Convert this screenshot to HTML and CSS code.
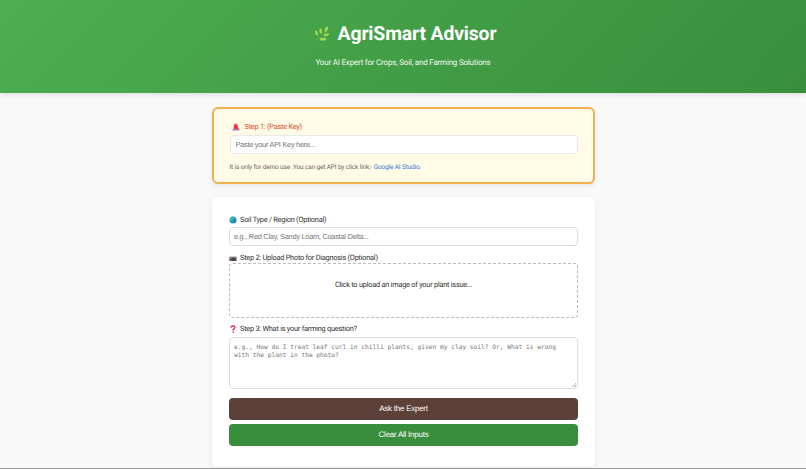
FILE: index.html
```html
<!DOCTYPE html>
<html lang="en">
<head>
    <meta charset="UTF-8">
    <meta name="viewport" content="width=device-width, initial-scale=1.0">
    <title>AgriSmart Advisor</title>
    <link rel="stylesheet" href="styles.css">
</head>
<body>

    <header class="header">
        <h1>
            <svg class="icon-leaf" viewBox="0 0 16 16">
                <path d="M2 14Q8 12 12 5" stroke="#7cb342" stroke-width=".7" fill="none"/>
                <g fill="#a5d84a">
                    <ellipse cx="2.5" cy="7" rx="1.3" ry="2.6" transform="rotate(-20 2.5 7)"/>
                    <ellipse cx="6.7" cy="5" rx="1.3" ry="2.8" transform="rotate(-5 6.7 5)"/>
                    <ellipse cx="12.3" cy="3.3" rx="1.5" ry="2.8" transform="rotate(22 12.3 3.3)"/>
                    <ellipse cx="12.5" cy="8.8" rx="2.8" ry="1.3" transform="rotate(-15 12.5 8.8)"/>
                    <ellipse cx="9" cy="13.2" rx="3.3" ry="1.4" transform="rotate(-5 9 13.2)"/>
                </g>
            </svg>
            <span>AgriSmart Advisor</span>
        </h1>
        <p>Your AI Expert for Crops, Soil, and Farming Solutions</p>
    </header>

    <main class="container">
        <!-- API key -->
        <section class="api-card">
            <label class="api-label" for="apiKey">
                <svg class="icon-siren" viewBox="0 0 8 8">
                    <path d="M1.6 6.2L2.2 1.4Q3.5-.2 5 .9L6.9 6.2Z" fill="#f02f49"/>
                    <path d="M3 2L4 .8L5 2Z" fill="#ff8a80"/>
                    <path d="M.8 6.2H7.4V7.6H.3Z" fill="#a06fb5"/>
                    <path d="M.7 2.5L1.6 3.4M6.4 1.2L7.2.4" stroke="#f2a0a0" stroke-width=".6"/>
                </svg>
                Step 1: (Paste Key)
            </label>
            <input class="field" type="text" id="apiKey" placeholder="Paste your API Key here...">
            <p class="note">It is only for demo use .You can get API by click link:- <a href="#">Google AI Studio.</a></p>
        </section>

        <!-- Question form -->
        <section class="form-card">
            <label for="soil">
                <svg viewBox="0 0 8 8">
                    <circle cx="4" cy="4" r="3.5" fill="#2196d3"/>
                    <path d="M1 2Q2.5.2 4.6.6L4.8 2.2L3.4 3L3.6 4.6L2 5.2L.7 3.8Z" fill="#45bd91"/>
                    <path d="M5 4L7.3 3.5Q7.4 5.8 5.6 7L4.6 5.4Z" fill="#2878b5"/>
                </svg>
                Soil Type / Region (Optional)
            </label>
            <input class="field" type="text" id="soil" placeholder="e.g., Red Clay, Sandy Loam, Coastal Delta...">

            <label for="photo">
                <svg viewBox="0 0 8 8">
                    <path d="M.4 2.8H7.6V7H.4Z" fill="#655c67"/>
                    <path d="M.4 2.8H7.6V4H.4Z" fill="#93878f"/>
                    <circle cx="4.5" cy="5.1" r="1.5" fill="#343039"/>
                    <circle cx="4.5" cy="5.1" r=".6" fill="#766b8b"/>
                </svg>
                Step 2: Upload Photo for Diagnosis (Optional)
            </label>
            <div class="upload-box" id="photo">Click to upload an image of your plant issue...</div>

            <label for="question">
                <svg viewBox="0 0 8 8">
                    <path d="M2 2.6Q2.1 1 4 1Q5.9 1 5.9 2.6Q5.9 3.5 4.2 4.4V5.4" fill="none" stroke="#e62d55" stroke-width="1.4"/>
                    <circle cx="4.2" cy="7" r=".8" fill="#e62d55"/>
                </svg>
                Step 3: What is your farming question?
            </label>
            <textarea id="question" placeholder="e.g., How do I treat leaf curl in chilli plants, given my clay soil? Or, What is wrong with the plant in the photo?"></textarea>

            <button class="btn btn-ask">Ask the Expert</button>
            <button class="btn btn-clear">Clear All Inputs</button>
        </section>
    </main>

</body>
</html>
```
FILE: styles.css
```css
* {
    box-sizing: border-box;
}

body {
    margin: 0;
    height: 469px;
    overflow: hidden;
    font-family: Roboto, "Liberation Sans", sans-serif;
    font-size: 7.4px;
    letter-spacing: -0.25px;
    color: #333;
    background-color: #f9f9f9;
    border-bottom: 1px solid #999;
    text-rendering: geometricPrecision;
}

/* Header */
.header {
    height: 93px;
    padding-top: 22px;
    text-align: center;
    color: white;
    background: linear-gradient(135deg, #4caf50, #388e3c);
    box-shadow: 0 2px 5px rgba(0, 0, 0, 0.1);
}

.header h1 {
    display: flex;
    justify-content: center;
    align-items: center;
    gap: 8px;
    margin: 0;
    padding-left: 4px;
    font-size: 19.4px;
    letter-spacing: -0.15px;
    line-height: 24px;
    font-weight: 700;
}

.icon-leaf {
    width: 16px;
    height: 16px;
}

.header p {
    margin: 12px 0 0;
    font-size: 8px;
    letter-spacing: -0.2px;
    line-height: 10px;
    color: #eef7ee;
}

.container {
    width: 383px;
    margin: 14px auto 0 212px;
}

/* API key card */
.api-card {
    height: 77px;
    padding: 12.5px 15.5px 0;
    background-color: #fffbe6;
    border: 2px solid #f2b04d;
    border-radius: 6px;
    box-shadow: 0 2px 5px rgba(0, 0, 0, 0.08);
}

label {
    display: flex;
    align-items: center;
    gap: 3px;
    height: 10px;
    line-height: 10px;
}

label svg {
    width: 8px;
    height: 8px;
}

.api-label {
    gap: 5px;
    padding-left: 2px;
    color: #d94b2b;
}

.field {
    display: block;
    width: 100%;
    height: 19px;
    padding: 0 5px;
    font-family: "Liberation Sans", sans-serif;
    font-size: 7.4px;
    letter-spacing: -0.27px;
    text-rendering: geometricPrecision;
    background-color: white;
    border: 1px solid #ddd;
    border-radius: 4px;
}

.api-card .field {
    margin-top: 3.5px;
    border-color: #e8e8e4;
}

::placeholder {
    color: #757575;
    opacity: 1;
}

.note {
    margin: 9px 0 0;
    font-size: 6.5px;
    letter-spacing: -0.15px;
    line-height: 9px;
    color: #666;
}

.note a {
    color: #3478d4;
    text-decoration: none;
}

/* Form card */
.form-card {
    height: 270px;
    margin-top: 13px;
    padding: 18px 17px 0;
    background-color: white;
    border-radius: 6px;
    box-shadow: 0 2px 8px rgba(0, 0, 0, 0.07);
}

.form-card .field {
    margin: 2px 0 7px;
    padding: 0 4px;
}

.upload-box {
    height: 55px;
    margin: 0 0 6px;
    padding-top: 16px;
    line-height: 10px;
    text-align: center;
    border: 1px dashed #bbb;
    border-radius: 4px;
}

textarea {
    display: block;
    width: 100%;
    height: 52px;
    margin: 3px 0 9px;
    padding: 5px 4px;
    font-family: "DejaVu Sans Mono", monospace;
    font-size: 6.22px;
    line-height: 8px;
    border: 1px solid #ddd;
    border-radius: 4px;
    resize: none;
    /* small corner grip */
    background: linear-gradient(135deg, transparent 50%, #bbb 50%, #bbb 60%, transparent 60%, transparent 75%, #bbb 75%) right 1px bottom 1px / 4px 4px no-repeat white;
}

.btn {
    display: block;
    width: 100%;
    height: 21.5px;
    margin-bottom: 4.5px;
    padding: 0;
    font-family: "Liberation Sans", sans-serif;
    font-size: 8px;
    letter-spacing: -0.25px;
    text-rendering: geometricPrecision;
    color: white;
    border: none;
    border-radius: 4px;
    cursor: pointer;
}

.btn-ask {
    background-color: #5d4037;
}

.btn-clear {
    background-color: #388e3c;
}
```
